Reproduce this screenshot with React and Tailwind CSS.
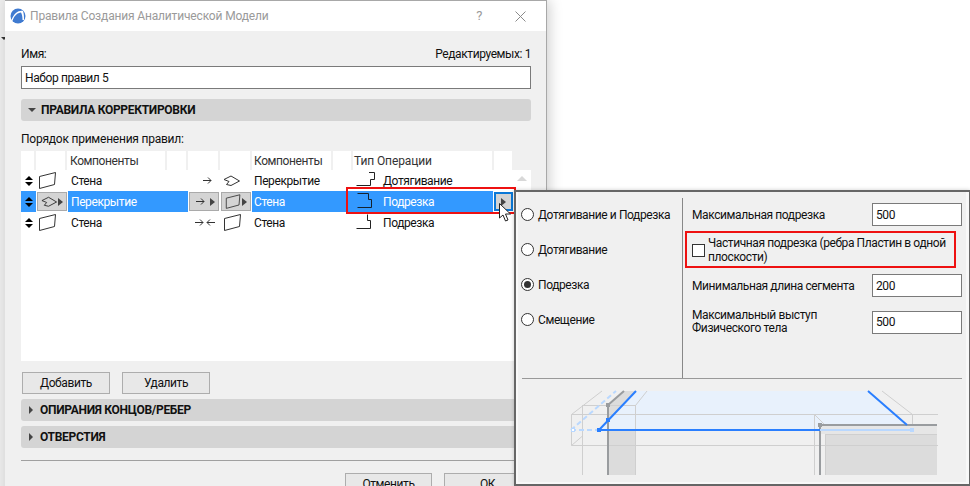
import React from 'react';

const font = { fontFamily: 'Roboto, sans-serif' };

function Wall({ size = 20 }) {
  return (
    <svg width={size} height="18" viewBox="0 0 20 18" fill="none" stroke="#333" strokeWidth="1">
      <path d="M1.5 4.5 L17.5 0.5 L16.5 12.5 L1.5 16.5 Z" />
    </svg>
  );
}

function Slab() {
  return (
    <svg width="18" height="12" viewBox="0 0 18 12" fill="none" stroke="#333" strokeWidth="1">
      <path d="M1 4.5 L8 1 L16.5 6 L8 10.5 L3.5 9.5 L6 6.5 Z" />
    </svg>
  );
}

function Arrow({ left }) {
  return (
    <svg width="9" height="9" viewBox="0 0 9 9" fill="none" stroke="#333" strokeWidth="1">
      {left ? <path d="M9 4.5 H1 M4 1.5 L1 4.5 L4 7.5" /> : <path d="M0 4.5 H8 M5 1.5 L8 4.5 L5 7.5" />}
    </svg>
  );
}

function Tri() {
  return <span className="w-0 h-0 border-y-[4px] border-y-transparent border-l-[5px] border-l-[#444]" />;
}

function Updown() {
  return (
    <div className="flex flex-col items-center gap-[2px]">
      <span className="w-0 h-0 border-x-[4px] border-x-transparent border-b-[4px] border-b-black" />
      <span className="w-0 h-0 border-x-[4px] border-x-transparent border-t-[4px] border-t-black" />
    </div>
  );
}

function OpIcon({ kind, white }) {
  const paths = {
    extend: 'M0.5 13.5 H14.5 V7.5 H18.5 V0.5 H13',
    trim: 'M0.5 0.5 H11.5 V6.5 H14.5 V14.5 H0.5',
    trim2: 'M11.5 0.5 V6.5 H14.5 V14.5 H0.5',
  };
  return (
    <svg width="20" height="17" viewBox="0 0 20 17" fill="none" stroke={white ? '#15222e' : '#222'} strokeWidth="1">
      <path d={paths[kind]} />
    </svg>
  );
}

function Section({ open, title }) {
  return (
    <div className="h-[22px] bg-[#d4d4d4] rounded-[3px] flex items-center pl-[7px] gap-[4px] text-[12px] font-bold tracking-[-0.3px] text-[#111]">
      {open ? (
        <span className="w-0 h-0 border-x-[4px] border-x-transparent border-t-[4px] border-t-[#444]" />
      ) : (
        <span className="w-0 h-0 ml-[1px] mr-[2px] border-y-[4px] border-y-transparent border-l-[4px] border-l-[#444]" />
      )}
      <span className="ml-[1px]">{title}</span>
    </div>
  );
}

function Button({ children, w }) {
  return (
    <div className={`h-[22px] ${w} border border-[#adadad] bg-[#e8e8e8] flex items-center justify-center text-[12px] text-[#111]`}>
      {children}
    </div>
  );
}

function HeaderCell({ w, children }) {
  return (
    <div className={`${w} shrink-0 h-[19px] bg-white border-r-2 border-[#f0f0f0] pl-[3px] flex items-center text-[12px] text-[#333]`}>
      {children}
    </div>
  );
}

const GrayBtn = ({ w, children }) => (
  <div className={`${w} shrink-0 h-[19px] bg-[#d4d4d4] border border-[#aaaaaa] flex items-center justify-between px-[3px]`}>
    {children}
  </div>
);

function Row({ leftIcon, left, arrow, rightIcon, right, op, opLabel }) {
  return (
    <div className="flex h-[21px] items-center text-[12px] text-[#111]">
      <div className="w-[15px] flex justify-center"><Updown /></div>
      <div className="w-[32px] pl-[2px] flex justify-start">{leftIcon}</div>
      <div className="w-[120px] pl-[3px]">{left}</div>
      <div className="w-[33px] flex justify-center pl-[5px]">{arrow}</div>
      <div className="w-[31px] pl-[2px]">{rightIcon}</div>
      <div className="w-[104px] pl-[2px]">{right}</div>
      <div className="w-[27px]"><OpIcon kind={op} /></div>
      <div>{opLabel}</div>
    </div>
  );
}

function SelectedRow() {
  return (
    <div className="flex h-[21px] items-center text-[12px] text-white">
      <div className="w-[15px] h-full bg-[#3399ff] flex justify-center items-center"><Updown /></div>
      <div className="w-[32px] h-full flex items-center pl-[1px]">
        <GrayBtn w="w-[30px]"><Slab /><Tri /></GrayBtn>
      </div>
      <div className="w-[120px] h-full bg-[#3399ff] pl-[3px] flex items-center">Перекрытие</div>
      <div className="w-[32px] h-full flex items-center pl-[1px]">
        <GrayBtn w="w-[30px]"><span className="ml-[3px]"><Arrow /></span><Tri /></GrayBtn>
      </div>
      <div className="w-[32px] h-full flex items-center pl-[1px]">
        <GrayBtn w="w-[30px]"><Wall /><Tri /></GrayBtn>
      </div>
      <div className="w-[241px] h-full bg-[#3399ff] flex items-center">
        <span className="w-[105px] pl-[2px]">Стена</span>
        <span className="w-[26px]"><OpIcon kind="trim" white /></span>
        <span>Подрезка</span>
      </div>
      <div className="w-[20px] h-full bg-white pl-[1px] py-[1px]">
        <div className="w-full h-full border-[2px] border-[#0a78d7] bg-[#d4d4d4] flex items-center justify-center"><Tri /></div>
      </div>
    </div>
  );
}

function Radio({ checked, children }) {
  return (
    <div className="h-[35px] flex items-center gap-[4px] text-[12px] text-[#111] whitespace-nowrap">
      <span className="w-[13px] h-[13px] rounded-full border border-[#333] bg-white flex items-center justify-center">
        {checked && <span className="w-[7px] h-[7px] rounded-full bg-[#333]" />}
      </span>
      {children}
    </div>
  );
}

function NumberField({ children }) {
  return (
    <div className="w-[90px] h-[23px] border border-[#7a7a7a] bg-white flex items-center pl-[3px] text-[12px] text-[#111]">
      {children}
    </div>
  );
}

function Preview() {
  const grid = '#cfcfcf';
  const gray = '#999c9f';
  const blue = '#2a7fff';
  const pale = '#b9d8ff';
  return (
    <svg width="440" height="90" viewBox="522 388 440 90" fill="none">
      <path d="M825 434 H937 V475 H825 Z" fill="#dcdcdc" />
      <path d="M820 425 H937 V434 H820 Z" fill="#e6e6e6" />
      <path d="M608 430 H635 V475 H608 Z" fill="#dcdcdc" />
      <path d="M608 405 L624 391 L637 391 L608 421 Z" fill="#dcdcdc" />
      <path d="M599 430 L637 391 H868 L907 425 H820 V430 Z" fill="#e8f1fc" />
      <g stroke={grid} strokeWidth="1">
        <path d="M571.5 414.5 H938 M571.5 445.5 H938 M571.5 414.5 V445.5" />
        <path d="M582.5 405 V475 M635.5 405 V475 M582.5 405.5 H635.5" />
        <path d="M571.5 414.5 L602 391 M635.5 405.5 L647 391 M571.5 445.5 L582.5 436" />
        <path d="M882 391 L912.5 414.5 V425 M814.5 414 V475 M814.5 414.5 L825 425 M825.5 434 V475 M825 434.5 H937" />
      </g>
      <g stroke={gray} strokeWidth="2">
        <path d="M608 405 V475 M608 405 L624 391" />
        <path d="M820 425 V475 M820 425 H937" />
      </g>
      <rect x="606" y="403" width="4" height="4" fill={gray} />
      <rect x="818" y="423" width="4" height="4" fill={gray} />
      <path d="M571 430 H599 M571 430 L616 391" stroke={pale} strokeWidth="2" strokeDasharray="5 3" />
      <rect x="571.5" y="428.5" width="3" height="3" fill="#fff" stroke={pale} />
      <path d="M820 430 H912" stroke={pale} strokeWidth="2" />
      <rect x="910" y="428" width="4" height="4" fill={pale} />
      <path d="M599 430 H820 M599 430 L636 391 M868 391 L907 425" stroke={blue} strokeWidth="2" />
      <rect x="597" y="428" width="4" height="4" fill={blue} />
      <rect x="606" y="418" width="4" height="4" fill={blue} />
    </svg>
  );
}

export default function App() {
  return (
    <div className="w-[970px] h-[486px] relative overflow-hidden bg-white flex tracking-[-0.4px]" style={font}>
      {/* window behind */}
      <div className="w-[5px] shrink-0 bg-[#ececec] pt-[37px]">
        <span className="block w-0 h-0 ml-[1px] border-x-[3px] border-x-transparent border-t-[3px] border-t-[#333]" />
      </div>

      {/* dialog */}
      <div className="w-[542px] h-[500px] shrink-0 bg-[#f0f0f0] border-t border-r border-[#a8a8a8] flex flex-col shadow-[3px_0_12px_rgba(0,0,0,0.18)]">
        <div className="h-[30px] shrink-0 bg-white flex items-center pl-[5px] pr-[20px]">
          <svg width="16" height="16" viewBox="0 0 16 16">
            <circle cx="8" cy="8" r="7.5" fill="#3f7ad0" />
            <path d="M1.5 12 C4 5 9 2 13 3 C14 6 14 9 14 12 L12.5 12 C12.5 9 12 6 11 4.5 C7.5 4.5 4 8 2.5 13 Z" fill="#fff" />
          </svg>
          <span className="ml-[4px] text-[12px] text-[#9a9a9a] tracking-[-0.16px]">Правила Создания Аналитической Модели</span>
          <span className="ml-auto text-[13px] text-[#9a9a9a]">?</span>
          <svg className="ml-[33px]" width="11" height="11" viewBox="0 0 11 11" stroke="#8a8a8a" strokeWidth="1">
            <path d="M0.5 0.5 L10.5 10.5 M10.5 0.5 L0.5 10.5" />
          </svg>
        </div>

        <div className="flex flex-col pl-[16px] pr-[15px]">
          <div className="h-[35px] flex items-end justify-between pb-[3px] text-[12px] text-[#111]">
            <span>Имя:</span>
            <span>Редактируемых: 1</span>
          </div>
          <div className="h-[23px] border border-[#7a7a7a] bg-white flex items-center pl-[3px] text-[12px] text-[#111]">
            Набор правил 5
          </div>

          <div className="mt-[10px]"><Section open title="ПРАВИЛА КОРРЕКТИРОВКИ" /></div>

          <div className="h-[30px] flex items-center pt-[5px] text-[12px] text-[#111] tracking-[-0.23px]">Порядок применения правил:</div>

          <div className="h-[210px] flex flex-col">
            <div className="flex">
              <HeaderCell w="w-[15px]" />
              <HeaderCell w="w-[31px]" />
              <HeaderCell w="w-[100px]">Компоненты</HeaderCell>
              <HeaderCell w="w-[21px]" />
              <HeaderCell w="w-[32px]" />
              <HeaderCell w="w-[32px]" />
              <HeaderCell w="w-[81px]"><span className="-ml-[1px]">Компоненты</span></HeaderCell>
              <HeaderCell w="w-[20px]" />
              <HeaderCell w="w-[141px]"><span className="-ml-[2px] tracking-[-0.1px]">Тип Операции</span></HeaderCell>
              <HeaderCell w="w-[20px]" />
            </div>
            <div className="flex-1 bg-white flex">
              <div className="w-[492px] flex flex-col">
                <Row leftIcon={<Wall />} left="Стена" arrow={<Arrow />} rightIcon={<Slab />} right="Перекрытие" op="extend" opLabel="Дотягивание" />
                <SelectedRow />
                <Row
                  leftIcon={<Wall />}
                  left="Стена"
                  arrow={<span className="flex gap-[2px] -ml-[5px]"><Arrow /><Arrow left /></span>}
                  rightIcon={<Wall />}
                  right="Стена"
                  op="trim2"
                  opLabel="Подрезка"
                />
              </div>
              <div className="flex-1 flex justify-center pt-[6px]">
                <span className="w-0 h-0 border-x-[5px] border-x-transparent border-b-[5px] border-b-[#d8d8d8]" />
              </div>
            </div>
          </div>

          <div className="flex gap-[12px] mt-[11px] pl-[1px]">
            <Button w="w-[88px]">Добавить</Button>
            <Button w="w-[88px]">Удалить</Button>
          </div>

          <div className="mt-[5px]"><Section title="ОПИРАНИЯ КОНЦОВ/РЕБЕР" /></div>
          <div className="mt-[5px]"><Section title="ОТВЕРСТИЯ" /></div>

          <div className="mt-[12px] border-t border-[#a0a0a0]" />

          <div className="flex justify-end gap-[12px] mt-[12px]">
            <Button w="w-[87px]">Отменить</Button>
            <Button w="w-[87px]">ОК</Button>
          </div>
        </div>
      </div>

      {/* red highlight on the table row */}
      <div className="absolute left-[346px] top-[187px] w-[170px] h-[27px] border-[2px] border-[#ee1111]" />

      {/* settings popover */}
      <div className="absolute left-[514px] top-[190px] w-[456px] h-[296px] border-2 border-r border-[#666] shadow-[0_0_4px_rgba(0,0,0,0.2)]">
        <div className="h-full bg-[#f0f0f0] border-l-[2px] border-r-[3px] border-b-[2px] border-[#f8f8f8]">
          <div className="flex h-[186px]">
            <div className="w-[164px] shrink-0 pl-[3px] pt-[5px]">
              <Radio>Дотягивание и Подрезка</Radio>
              <Radio>Дотягивание</Radio>
              <Radio checked>Подрезка</Radio>
              <Radio>Смещение</Radio>
            </div>
            <div className="mt-[6px] border-l border-[#888] pl-[9px] flex-1 pr-[4px] pt-[5px] text-[12px] text-[#111] flex flex-col">
              <div className="flex items-center justify-between">
                <span>Максимальная подрезка</span>
                <NumberField>500</NumberField>
              </div>
              <div className="relative h-[48px] flex items-center gap-[3px]">
                <span className="w-[13px] h-[13px] shrink-0 border border-[#333] bg-white" />
                <span className="leading-[14px] w-[246px]">Частичная подрезка (ребра Пластин в одной плоскости)</span>
                <div className="absolute -left-[7px] top-[5px] w-[271px] h-[37px] border-[2px] border-[#ee1111]" />
              </div>
              <div className="flex items-center justify-between">
                <span>Минимальная длина сегмента</span>
                <NumberField>200</NumberField>
              </div>
              <div className="flex items-center justify-between mt-[12px]">
                <span className="leading-[13px]">Максимальный выступ<br />Физического тела</span>
                <NumberField>500</NumberField>
              </div>
            </div>
          </div>
          <div className="mx-[4px] border-t border-[#999]" />
          <div className="pl-[4px] pt-[9px]"><Preview /></div>
        </div>
      </div>

      {/* mouse cursor */}
      <svg className="absolute left-[499px] top-[203px]" width="13" height="19" viewBox="0 0 13 19">
        <path d="M0.5 0.5 V15 L4 12 L6.5 18 L9 17 L6.5 11 H11.5 Z" fill="#fff" stroke="#222" strokeWidth="1" />
      </svg>
    </div>
  );
}
